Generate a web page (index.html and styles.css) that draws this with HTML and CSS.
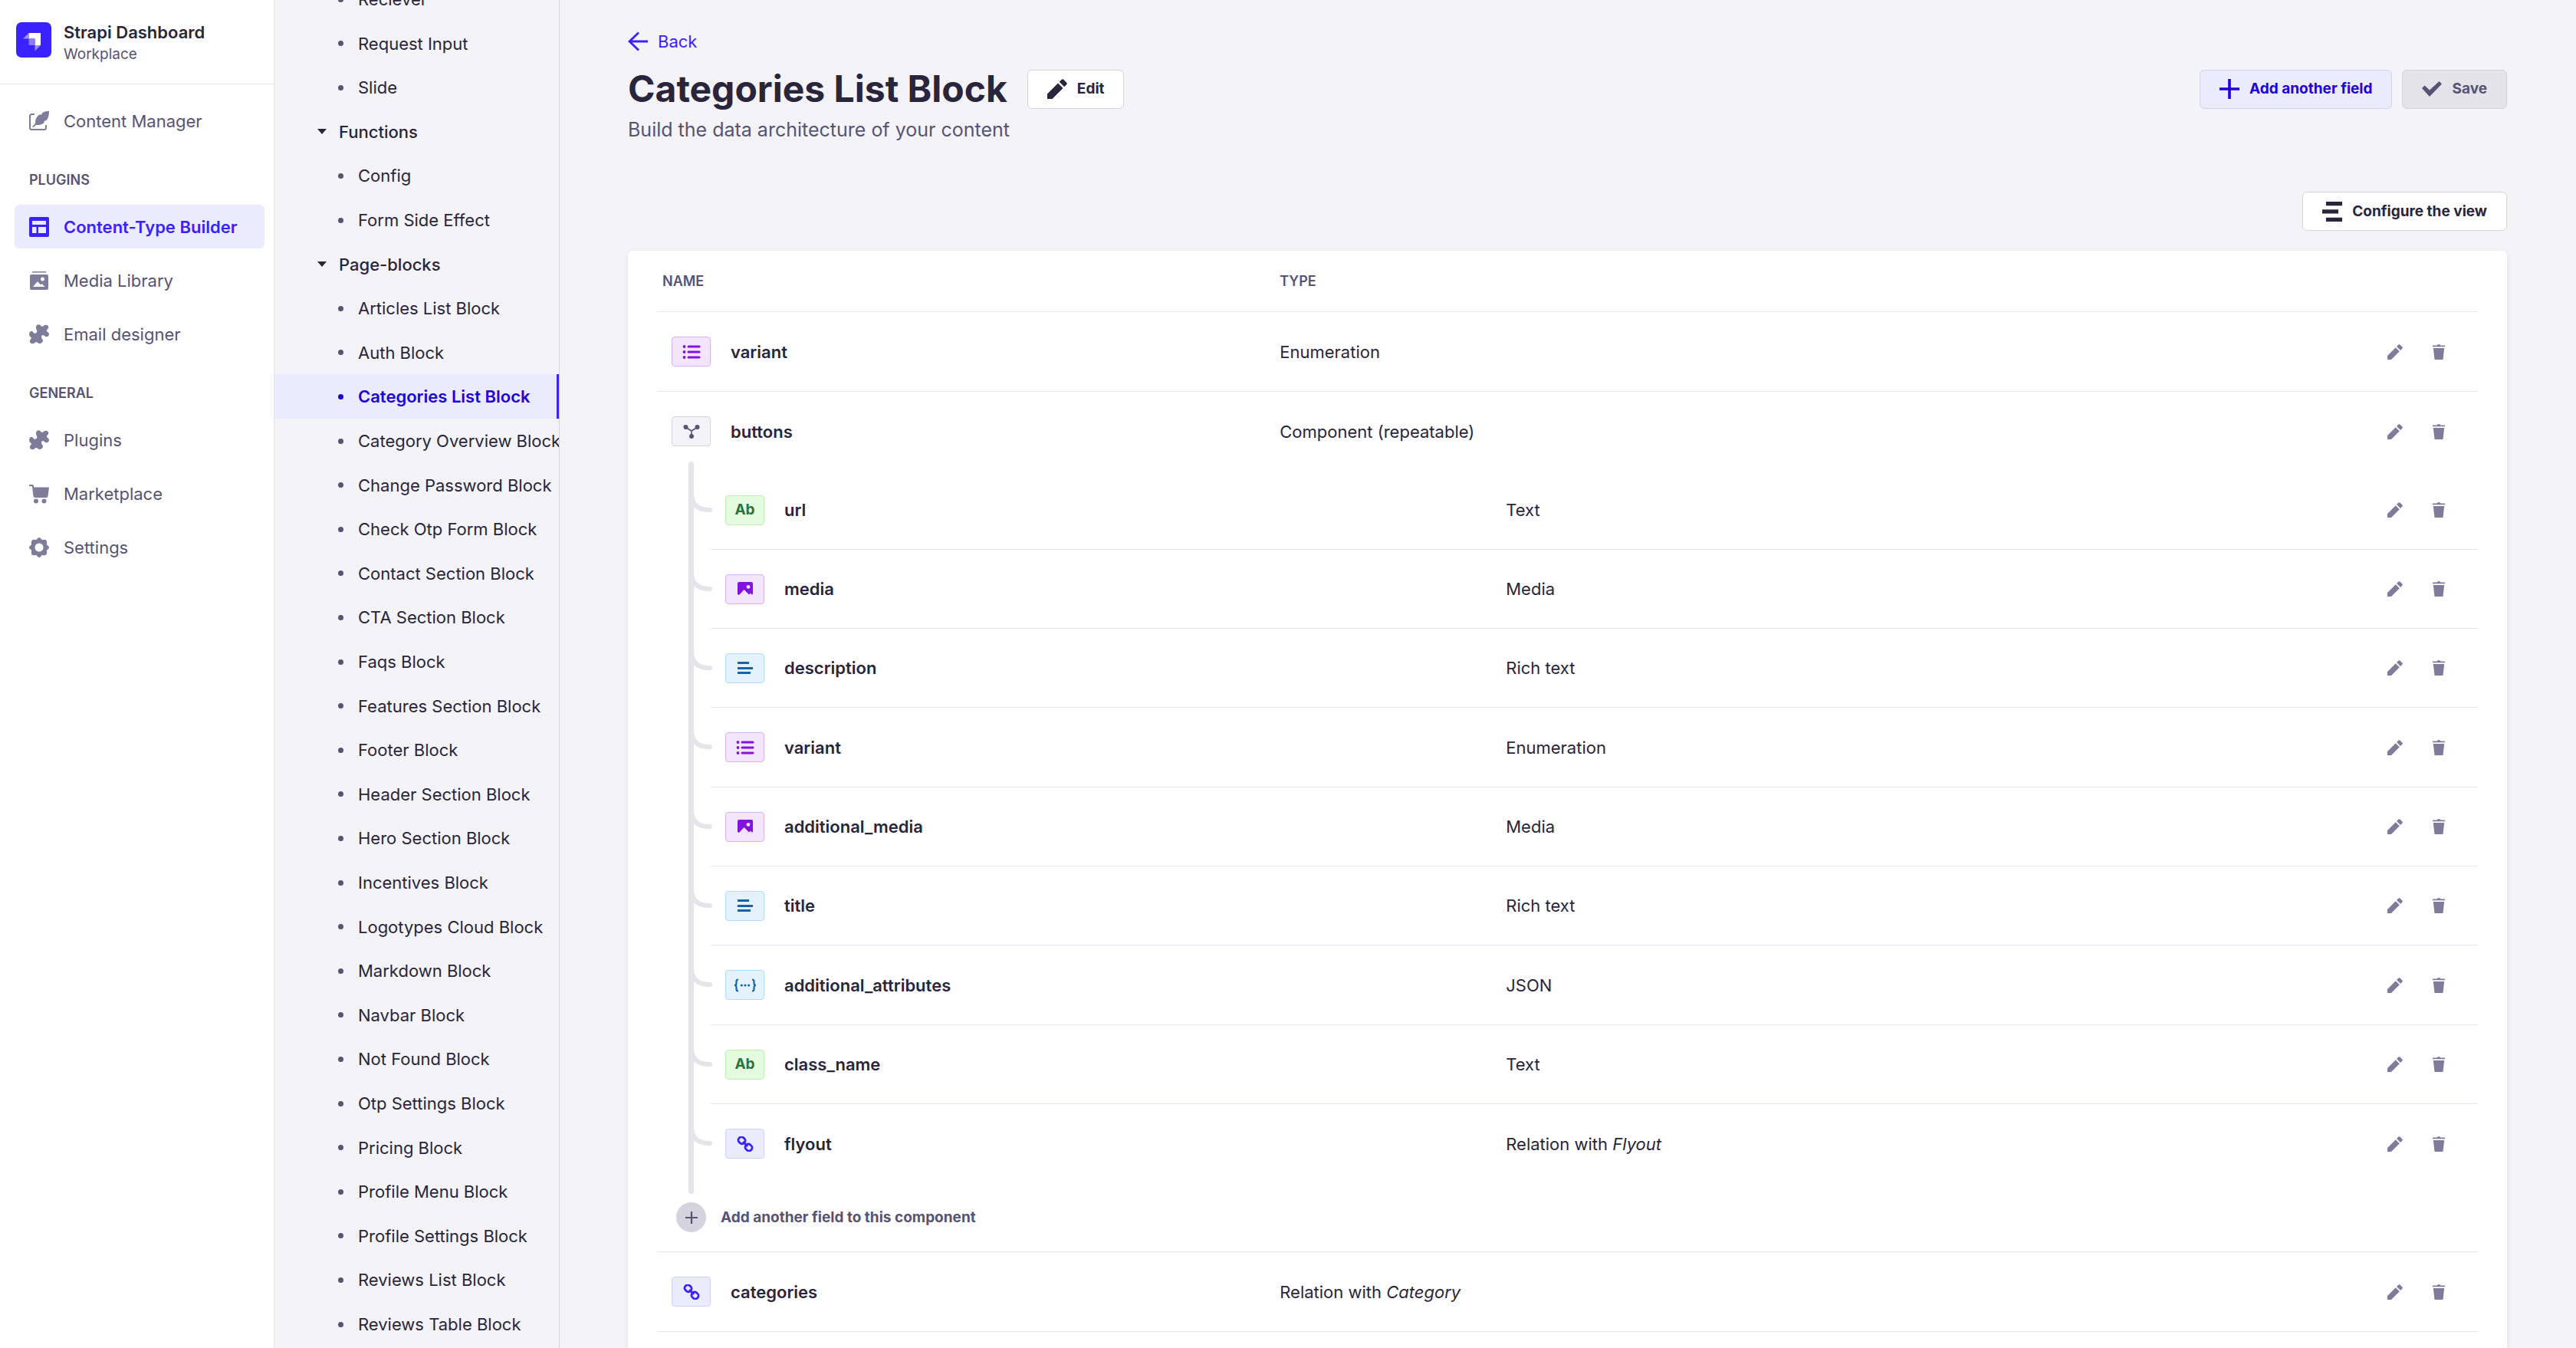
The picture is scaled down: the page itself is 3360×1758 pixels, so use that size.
FILE: index.html
```html
<!DOCTYPE html>
<html lang="en">
<head>
<meta charset="utf-8">
<title>Strapi Dashboard</title>
<link rel="stylesheet" href="styles.css">
</head>
<body>
<svg class="sprite" aria-hidden="true">
  <symbol id="i-feather" viewBox="0 0 26 26"><path d="M7 4H3.500Q1 4 1 6.500V21.500Q1 24 3.500 24H20Q22 24 22 21.500V18" fill="none" stroke="currentColor" stroke-width="2"/><path d="M26 0C22 0 19 .5 17 2.500L16 5L14.500 4C9 7 8 11 8 16L4 20.500L5.500 21L9 18C13 18.500 17 17.500 20 14.500L19 13.500L23 11.500C25.500 8 26 4 26 0Z"/></symbol>
  <symbol id="i-layout" viewBox="0 0 26 26"><path fill-rule="evenodd" d="M2 0H24Q26 0 26 2V24Q26 26 24 26H2Q0 26 0 24V2Q0 0 2 0ZM4 5V10H22V5ZM4 13V21H9.500V13ZM12 13V21H22V13Z"/></symbol>
  <symbol id="i-library" viewBox="0 0 26 26"><path fill-rule="evenodd" d="M4 1H22V2.500H4ZM3 5H23Q25 5 25 7V23Q25 25 23 25H3Q1 25 1 23V7Q1 5 3 5ZM5 21H20.500L16.500 17L15 18.500L11 14ZM17.500 8.500A2.500 2.500 0 1 0 17.600 8.500Z"/></symbol>
  <symbol id="i-puzzle" viewBox="0 0 26 26"><path d="M9.500 6.500C7.500 1.500 11 0 13 .3C15 .6 15.500 3 17 3C18.500 3 19 .8 22 .8C25 1 26 3.500 24.800 5.200C24 6.500 22.500 7.500 23 8.800C23.500 10 26 10.500 26 13C26 15.500 23 17 21.500 16C20 15 19 13.500 17.500 14C15.500 14.800 15.800 17 16.800 18.500C18 20 18.500 22 17 23.500C15.500 25 13.500 25.500 12 24.500C10.500 23.500 9.500 22.500 8 23.500C6.500 24.800 4 26 2 24.500C.3 23 .5 21 2 19.500C3.500 18 3 17 1.500 16C0 15 -.5 12 1 10C2.500 8 4.500 8.500 5 10C5.800 11.500 8 12.500 9.500 11C11 9.500 10 8 9.500 6.500Z"/></symbol>
  <symbol id="i-cart" viewBox="0 0 26 26"><path d="M0 1H4.500Q6 1 6 2.500V4.500H26L24.500 16Q24.300 18 22.500 18H8Q6 18 5.500 16L4 4Q4 3 3 3H0Z"/><circle cx="9" cy="22.500" r="3"/><circle cx="19.500" cy="22.500" r="3"/></symbol>
  <symbol id="i-gear" viewBox="0 0 26 26"><path fill-rule="evenodd" d="M11 1Q13 -1 15 1L16.500 3L20 2.800Q23 3 23.200 6L23 9.500L25 11Q27 13 25 15L23 16.500L23.200 20Q23 23 20 23.200L16.500 23L15 25Q13 27 11 25L9.500 23L6 23.200Q3 23 2.800 20L3 16.500L1 15Q-1 13 1 11L3 9.500L2.800 6Q3 3 6 2.800L9.500 3ZM13 7.500A5.500 5.500 0 1 0 13.010 7.500Z"/></symbol>
  <symbol id="i-back" viewBox="0 0 26 26"><path d="M14 1.500L2 13L14 24.500M2 13H26" fill="none" stroke="currentColor" stroke-width="2.800"/></symbol>
  <symbol id="i-pencil" viewBox="0 0 26 26"><path d="M0 26V19.500L14 5.500L20.500 12L6.500 26ZM15.700 3.800L18.700 .8Q20 -.4 21.300 .8L25.200 4.700Q26.400 6 25.200 7.300L22.200 10.300Z"/></symbol>
  <symbol id="i-trash" viewBox="0 0 20 20"><path d="M2 1.500H7.500Q8 0 10 0Q12 0 12.500 1.500H18V3.200H2ZM2.800 5H17.200L15.500 20H4.500Z"/></symbol>
  <symbol id="i-plus" viewBox="0 0 26 26"><path d="M11.200 0H14.800V11.200H26V14.800H14.800V26H11.200V14.800H0V11.200H11.200Z"/></symbol>
  <symbol id="i-check" viewBox="0 0 26 26"><path d="M0 12L3.500 8.500L10 14.500L22.500 3L26 6.500L10 23Z"/></symbol>
  <symbol id="i-config" viewBox="0 0 26 26"><path d="M5 0H26V5.300H5ZM0 10.300H21V15.600H0ZM5 20.700H26V26H5Z"/></symbol>
  <symbol id="i-enum" viewBox="0 0 24 20"><path d="M8 3H22M8 10H22M8 17H22" stroke="currentColor" stroke-width="3" stroke-linecap="round"/><circle cx="2.500" cy="3" r="1.900"/><circle cx="2.500" cy="10" r="1.900"/><circle cx="2.500" cy="17" r="1.900"/></symbol>
  <symbol id="i-component" viewBox="0 0 24 20"><path d="M4 4L12 9L20 4M12 9V17" fill="none" stroke="currentColor" stroke-width="1.600"/><circle cx="4.500" cy="4" r="3"/><circle cx="19.500" cy="4" r="3"/><circle cx="12" cy="16" r="3"/></symbol>
  <symbol id="i-media" viewBox="0 0 24 20"><path fill-rule="evenodd" d="M4 1H20Q22 1 22 3V16L21 18L19 15.500L17 17.500L10.500 11L4 18L2 17V3Q2 1 4 1ZM16 5A2.400 2.400 0 1 0 16.010 5Z"/></symbol>
  <symbol id="i-rich" viewBox="0 0 24 20"><path d="M2 3.500H17M2 10.500H22M2 16.500H19" stroke="currentColor" stroke-width="3"/></symbol>
  <symbol id="i-json" viewBox="0 0 30 20"><path d="M6 2.500Q3.500 2.500 3.500 5V7.500Q3.500 10 1 10Q3.500 10 3.500 12.500V15Q3.500 17.500 6 17.500M24 2.500Q26.500 2.500 26.500 5V7.500Q26.500 10 29 10Q26.500 10 26.500 12.500V15Q26.500 17.500 24 17.500" fill="none" stroke="currentColor" stroke-width="2.200"/><circle cx="10.300" cy="10" r="1.600"/><circle cx="15" cy="10" r="1.600"/><circle cx="19.700" cy="10" r="1.600"/></symbol>
  <symbol id="i-link" viewBox="0 0 24 20"><g fill="none" stroke="currentColor" stroke-width="2.800"><rect x="3" y="1.200" width="9" height="8" rx="3.500" transform="rotate(45 7.500 5.200)"/><rect x="12" y="10.500" width="9" height="8" rx="3.500" transform="rotate(45 16.500 14.500)"/><path d="M9 7L15 13"/></g></symbol>
  <symbol id="i-branch" viewBox="0 0 32 26"><path d="M4 0C4 14 12 21 28 21" fill="none" stroke="currentColor" stroke-width="6" stroke-linecap="round"/></symbol>
</svg>

<div class="app">
  <nav class="main-nav" aria-label="Main">
    <div class="brand">
      <svg class="logo" viewBox="0 0 46 46" aria-hidden="true"><rect width="46" height="46" rx="7" fill="#3a22fe"/><path d="M16.500 14H32V30H24.500V21.500H16.500Z" fill="#fff"/><path d="M16.500 14V21.500H9ZM24.500 30H32L24.500 37.500Z" fill="#9c90ff"/><path d="M16.500 21.500H24.500V30H18Q16.500 30 16.500 28.500Z" fill="#8a7bff"/></svg>
      <div><p class="brand-name">Strapi Dashboard</p><p class="brand-sub">Workplace</p></div>
    </div>
    <div class="nav-body">
      <ul class="nav-list">
        <li><a href="#"><svg><use href="#i-feather"/></svg>Content Manager</a></li>
      </ul>
      <h2 class="nav-label">PLUGINS</h2>
      <ul class="nav-list">
        <li><a href="#" class="active" aria-current="page"><svg><use href="#i-layout"/></svg>Content-Type Builder</a></li>
        <li><a href="#"><svg><use href="#i-library"/></svg>Media Library</a></li>
        <li><a href="#"><svg><use href="#i-puzzle"/></svg>Email designer</a></li>
      </ul>
      <h2 class="nav-label">GENERAL</h2>
      <ul class="nav-list">
        <li><a href="#"><svg><use href="#i-puzzle"/></svg>Plugins</a></li>
        <li><a href="#"><svg><use href="#i-cart"/></svg>Marketplace</a></li>
        <li><a href="#"><svg><use href="#i-gear"/></svg>Settings</a></li>
      </ul>
    </div>
  </nav>

  <nav class="sub-nav" aria-label="Content types">
    <ul>
      <li><a href="#">Reciever</a></li>
      <li><a href="#">Request Input</a></li>
      <li><a href="#">Slide</a></li>
      <li><button type="button">Functions</button></li>
      <li><a href="#">Config</a></li>
      <li><a href="#">Form Side Effect</a></li>
      <li><button type="button">Page-blocks</button></li>
      <li><a href="#">Articles List Block</a></li>
      <li><a href="#">Auth Block</a></li>
      <li><a href="#" class="active" aria-current="page">Categories List Block</a></li>
      <li><a href="#">Category Overview Block</a></li>
      <li><a href="#">Change Password Block</a></li>
      <li><a href="#">Check Otp Form Block</a></li>
      <li><a href="#">Contact Section Block</a></li>
      <li><a href="#">CTA Section Block</a></li>
      <li><a href="#">Faqs Block</a></li>
      <li><a href="#">Features Section Block</a></li>
      <li><a href="#">Footer Block</a></li>
      <li><a href="#">Header Section Block</a></li>
      <li><a href="#">Hero Section Block</a></li>
      <li><a href="#">Incentives Block</a></li>
      <li><a href="#">Logotypes Cloud Block</a></li>
      <li><a href="#">Markdown Block</a></li>
      <li><a href="#">Navbar Block</a></li>
      <li><a href="#">Not Found Block</a></li>
      <li><a href="#">Otp Settings Block</a></li>
      <li><a href="#">Pricing Block</a></li>
      <li><a href="#">Profile Menu Block</a></li>
      <li><a href="#">Profile Settings Block</a></li>
      <li><a href="#">Reviews List Block</a></li>
      <li><a href="#">Reviews Table Block</a></li>
    </ul>
  </nav>

  <main class="content">
    <a class="back" href="#"><svg><use href="#i-back"/></svg>Back</a>
    <header class="title-row">
      <h1>Categories List Block</h1>
      <button class="btn" type="button"><svg><use href="#i-pencil"/></svg>Edit</button>
      <div class="actions">
        <button class="btn btn-primary" type="button"><svg><use href="#i-plus"/></svg>Add another field</button>
        <button class="btn btn-disabled" type="button" disabled><svg><use href="#i-check"/></svg>Save</button>
      </div>
    </header>
    <p class="subtitle">Build the data architecture of your content</p>
    <div class="toolbar"><button class="btn" type="button"><svg><use href="#i-config"/></svg>Configure the view</button></div>

    <section class="card">
      <table class="fields">
        <thead><tr><th class="col-name">NAME</th><th>TYPE</th><th class="col-actions"></th></tr></thead>
        <tbody>
          <tr>
            <td><div class="field"><span class="badge violet"><svg><use href="#i-enum"/></svg></span>variant</div></td>
            <td>Enumeration</td>
            <td><div class="row-actions"><button type="button" aria-label="Edit variant"><svg><use href="#i-pencil"/></svg></button><button type="button" aria-label="Delete variant"><svg><use href="#i-trash"/></svg></button></div></td>
          </tr>
          <tr class="parent">
            <td><div class="field"><span class="badge gray"><svg><use href="#i-component"/></svg></span>buttons</div></td>
            <td>Component (repeatable)</td>
            <td><div class="row-actions"><button type="button" aria-label="Edit buttons"><svg><use href="#i-pencil"/></svg></button><button type="button" aria-label="Delete buttons"><svg><use href="#i-trash"/></svg></button></div></td>
          </tr>
          <tr class="group">
            <td colspan="3">
              <div class="tree">
                <table class="nested">
                  <colgroup><col class="nested-name"><col><col class="col-actions"></colgroup>
                  <tbody>
                    <tr><td><svg class="branch"><use href="#i-branch"/></svg><div class="field"><span class="badge green">Ab</span>url</div></td><td>Text</td><td><div class="row-actions"><button type="button" aria-label="Edit url"><svg><use href="#i-pencil"/></svg></button><button type="button" aria-label="Delete url"><svg><use href="#i-trash"/></svg></button></div></td></tr>
                    <tr><td><svg class="branch"><use href="#i-branch"/></svg><div class="field"><span class="badge violet"><svg><use href="#i-media"/></svg></span>media</div></td><td>Media</td><td><div class="row-actions"><button type="button" aria-label="Edit media"><svg><use href="#i-pencil"/></svg></button><button type="button" aria-label="Delete media"><svg><use href="#i-trash"/></svg></button></div></td></tr>
                    <tr><td><svg class="branch"><use href="#i-branch"/></svg><div class="field"><span class="badge blue"><svg><use href="#i-rich"/></svg></span>description</div></td><td>Rich text</td><td><div class="row-actions"><button type="button" aria-label="Edit description"><svg><use href="#i-pencil"/></svg></button><button type="button" aria-label="Delete description"><svg><use href="#i-trash"/></svg></button></div></td></tr>
                    <tr><td><svg class="branch"><use href="#i-branch"/></svg><div class="field"><span class="badge violet"><svg><use href="#i-enum"/></svg></span>variant</div></td><td>Enumeration</td><td><div class="row-actions"><button type="button" aria-label="Edit variant"><svg><use href="#i-pencil"/></svg></button><button type="button" aria-label="Delete variant"><svg><use href="#i-trash"/></svg></button></div></td></tr>
                    <tr><td><svg class="branch"><use href="#i-branch"/></svg><div class="field"><span class="badge violet"><svg><use href="#i-media"/></svg></span>additional_media</div></td><td>Media</td><td><div class="row-actions"><button type="button" aria-label="Edit additional_media"><svg><use href="#i-pencil"/></svg></button><button type="button" aria-label="Delete additional_media"><svg><use href="#i-trash"/></svg></button></div></td></tr>
                    <tr><td><svg class="branch"><use href="#i-branch"/></svg><div class="field"><span class="badge blue"><svg><use href="#i-rich"/></svg></span>title</div></td><td>Rich text</td><td><div class="row-actions"><button type="button" aria-label="Edit title"><svg><use href="#i-pencil"/></svg></button><button type="button" aria-label="Delete title"><svg><use href="#i-trash"/></svg></button></div></td></tr>
                    <tr><td><svg class="branch"><use href="#i-branch"/></svg><div class="field"><span class="badge blue"><svg class="wide"><use href="#i-json"/></svg></span>additional_attributes</div></td><td>JSON</td><td><div class="row-actions"><button type="button" aria-label="Edit additional_attributes"><svg><use href="#i-pencil"/></svg></button><button type="button" aria-label="Delete additional_attributes"><svg><use href="#i-trash"/></svg></button></div></td></tr>
                    <tr><td><svg class="branch"><use href="#i-branch"/></svg><div class="field"><span class="badge green">Ab</span>class_name</div></td><td>Text</td><td><div class="row-actions"><button type="button" aria-label="Edit class_name"><svg><use href="#i-pencil"/></svg></button><button type="button" aria-label="Delete class_name"><svg><use href="#i-trash"/></svg></button></div></td></tr>
                    <tr><td><svg class="branch"><use href="#i-branch"/></svg><div class="field"><span class="badge indigo"><svg><use href="#i-link"/></svg></span>flyout</div></td><td>Relation with <em>Flyout</em></td><td><div class="row-actions"><button type="button" aria-label="Edit flyout"><svg><use href="#i-pencil"/></svg></button><button type="button" aria-label="Delete flyout"><svg><use href="#i-trash"/></svg></button></div></td></tr>
                  </tbody>
                </table>
              </div>
              <button class="add-nested" type="button"><span class="add-circle"><svg><use href="#i-plus"/></svg></span>Add another field to this component</button>
            </td>
          </tr>
          <tr>
            <td><div class="field"><span class="badge indigo"><svg><use href="#i-link"/></svg></span>categories</div></td>
            <td>Relation with <em>Category</em></td>
            <td><div class="row-actions"><button type="button" aria-label="Edit categories"><svg><use href="#i-pencil"/></svg></button><button type="button" aria-label="Delete categories"><svg><use href="#i-trash"/></svg></button></div></td>
          </tr>
        </tbody>
      </table>
    </section>
  </main>
</div>
</body>
</html>
```

FILE: styles.css
```css
:root {
  --page: #f4f3f8;
  --line: #e4e4ea;
  --line-strong: #d5d4de;
  --text: #28253d;
  --muted: #565375;
  --icon: #7e7b9b;
  --primary: #3a22fe;
  --primary-dark: #2000d8;
  --primary-soft: #ebebfe;
}

* { box-sizing: border-box; }

body {
  margin: 0;
  background: var(--page);
  color: var(--text);
  font: 22px/32px Inter, "Liberation Sans", sans-serif;
}

h1, h2, p, ul { margin: 0; padding: 0; }
ul { list-style: none; }
a { color: inherit; text-decoration: none; }
button { font: inherit; color: inherit; background: none; border: 0; padding: 0; }
svg { display: block; flex: none; fill: currentColor; }
.sprite { position: absolute; width: 0; height: 0; }

.app { display: flex; height: 100vh; overflow: hidden; }

/* Main navigation */
.main-nav { flex: none; width: 358px; background: #fff; border-right: 1px solid var(--line); }
.brand { display: flex; gap: 16px; height: 110px; padding: 26px 21px 0; border-bottom: 1px solid var(--line); }
.logo { width: 46px; height: 46px; margin-top: 3px; }
.brand-name { font-weight: 600; }
.brand-sub { font-size: 19px; line-height: 26px; color: var(--muted); }
.nav-body { padding: 19px 12px 0 19px; }
.nav-list { display: grid; gap: 13px; }
.nav-list a { display: flex; align-items: center; gap: 19px; height: 57px; padding: 0 19px; border-radius: 6px; color: var(--muted); }
.nav-list svg { width: 26px; height: 26px; color: var(--icon); }
.nav-list .active { background: var(--primary-soft); color: var(--primary); font-weight: 600; }
.nav-list .active svg { color: var(--primary); }
.nav-label { margin: 38px 0 21px 19px; font-size: 18px; line-height: 22px; font-weight: 600; color: var(--muted); }

/* Content type list */
.sub-nav { flex: none; width: 372px; overflow: hidden; border-right: 1px solid var(--line-strong); }
.sub-nav ul { margin-top: -30px; }
.sub-nav li { display: flex; height: 58px; white-space: nowrap; }
.sub-nav li:nth-child(5n+2), .sub-nav li:nth-child(5n+4) { height: 57px; }
.sub-nav a { flex: 1; display: flex; align-items: center; padding-left: 83px; }
.sub-nav a::before { content: ""; flex: none; width: 7px; height: 7px; margin-right: 19px; border-radius: 50%; background: var(--muted); }
.sub-nav .active { background: var(--primary-soft); border-right: 3px solid var(--primary); color: var(--primary-dark); font-weight: 600; }
.sub-nav .active::before { background: var(--primary-dark); }
.sub-nav button { display: flex; align-items: center; gap: 16px; padding-left: 56px; font-weight: 500; }
.sub-nav button::before { content: ""; border: 6px solid transparent; border-top: 7px solid var(--text); border-bottom: 0; }

/* Page */
.content { flex: 1; min-width: 0; display: flex; flex-direction: column; padding: 38px 90px 0 89px; }
.back { display: flex; align-items: center; align-self: flex-start; gap: 13px; color: var(--primary); }
.back svg { width: 26px; height: 26px; }
.title-row { display: flex; align-items: center; margin-top: 14px; height: 64px; }
h1 { margin-right: 26px; font-size: 48px; line-height: 64px; font-weight: 700; white-space: nowrap; }
.subtitle { font-size: 25px; line-height: 42px; color: var(--muted); }
.actions { display: flex; gap: 13px; margin-left: auto; }
.toolbar { display: flex; justify-content: flex-end; margin: 60px 0 26px; }

.btn { display: flex; align-items: center; gap: 13px; height: 51px; padding: 0 25px; border: 1px solid var(--line-strong); border-radius: 6px; background: #fff; font-size: 19px; line-height: 26px; font-weight: 700; white-space: nowrap; }
.btn svg { width: 26px; height: 26px; }
.btn-primary { background: var(--primary-soft); border-color: #d2d0ff; color: var(--primary-dark); }
.btn-disabled { background: #e4e3e9; color: var(--muted); }

.card { flex: 1 0 auto; padding: 0 38px; background: #fff; border-radius: 6px 6px 0 0; box-shadow: 0 2px 6px rgba(40, 37, 61, 0.1); }

/* Field tables */
table { width: 100%; table-layout: fixed; border-collapse: separate; border-spacing: 0; }
th, td { padding: 0; text-align: left; border-bottom: 1px solid var(--line); }
th { height: 80px; font-size: 18px; line-height: 22px; font-weight: 600; color: var(--muted); }
.fields td { height: 104px; }
.col-name { width: 34.2%; padding-left: 7px; }
.col-actions { width: 160px; }
.fields .parent td { height: 103px; border-bottom: 0; }
.field { display: flex; align-items: center; gap: 26px; padding-left: 19px; font-weight: 600; }

.badge { display: flex; align-items: center; justify-content: center; width: 51px; height: 39px; border: 1px solid; border-radius: 4px; font-size: 19px; font-weight: 700; }
.badge svg { width: 24px; height: 20px; }
.badge .wide { width: 30px; }
.violet { background: #f3e6fc; border-color: #d9b2f3; color: #8312de; }
.gray { background: #f4f3f8; border-color: #d5d4de; color: #565375; }
.green { background: #e4fbe0; border-color: #c0efb6; color: #2c733b; }
.blue { background: #e4f2fe; border-color: #b2dcfd; color: #1763a8; }
.indigo { background: #ebebfe; border-color: #d2d0ff; color: #3a22fe; }

.row-actions { display: flex; justify-content: flex-end; gap: 37px; padding-right: 41px; color: var(--icon); }
.row-actions svg { width: 20px; height: 20px; }

.tree { position: relative; padding-left: 70px; }
.tree::before { content: ""; position: absolute; left: 41px; top: -12px; bottom: -14px; width: 7px; border-radius: 4px; background: var(--line); }
.nested-name { width: 45%; }
.nested td { position: relative; height: 103px; }
.nested tr:nth-child(3n+4) td { height: 104px; }
.nested tr:last-child td { border-bottom: 0; }
.branch { position: absolute; left: -29px; top: 30px; width: 32px; height: 26px; color: var(--line); }

.add-nested { display: flex; align-items: center; gap: 19px; height: 89px; padding-left: 25px; font-size: 19px; line-height: 26px; font-weight: 700; color: var(--muted); }
.add-circle { display: flex; align-items: center; justify-content: center; width: 39px; height: 39px; border-radius: 50%; background: var(--line-strong); }
.add-circle svg { width: 16px; height: 16px; }
```
